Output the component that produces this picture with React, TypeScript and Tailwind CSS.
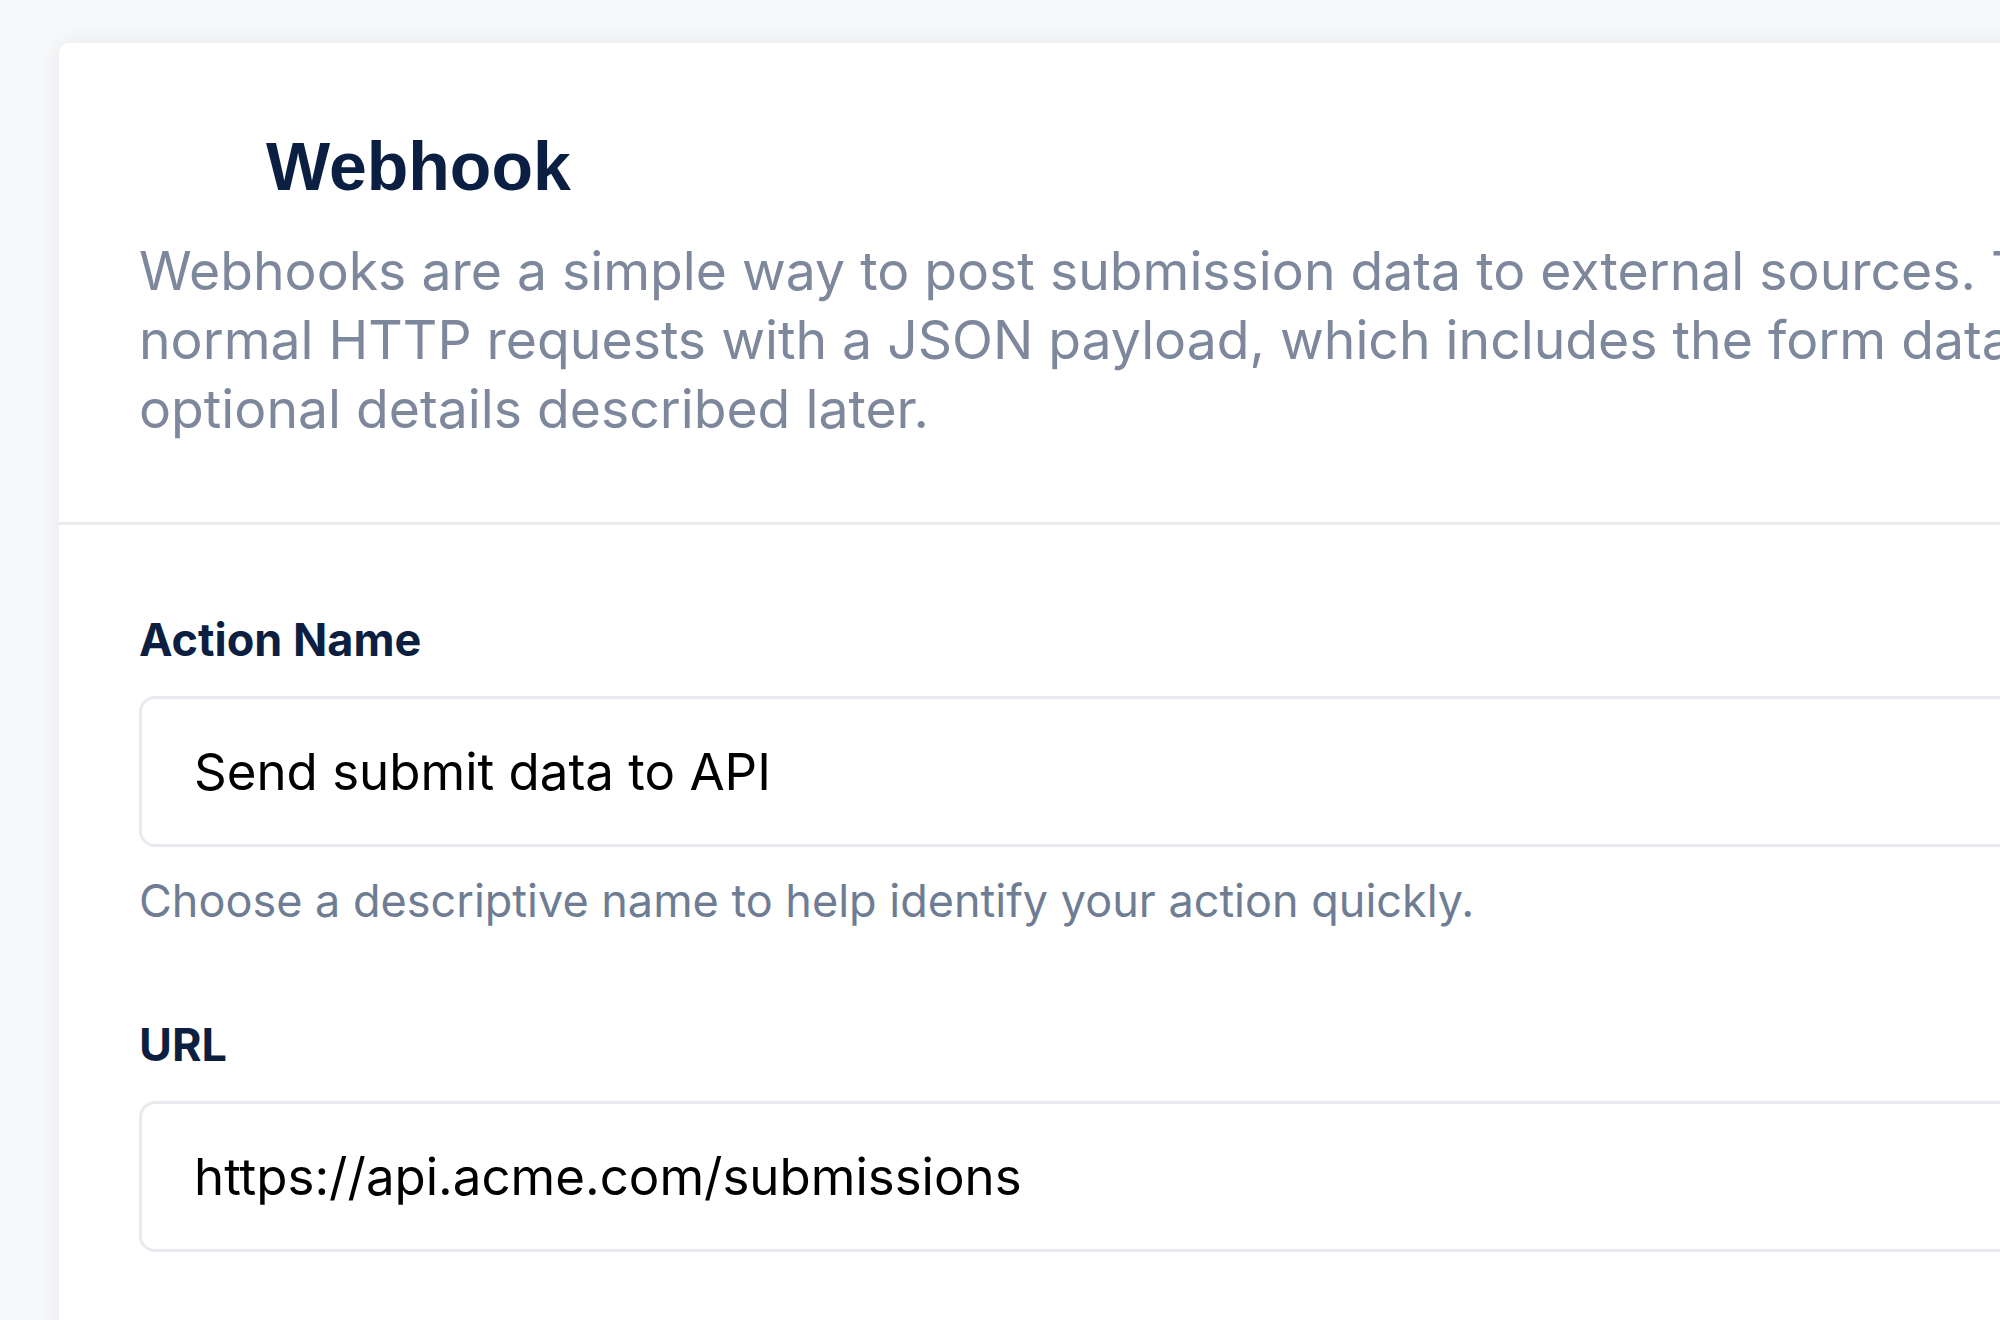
import type { ReactNode } from 'react';

type FieldProps = {
    label: string;
    value: string;
    hint?: ReactNode;
};

function Field({ label, value, hint }: FieldProps) {
    return (
        <div className="flex flex-col">
            <label className="text-[45px] leading-[54px] font-bold text-[#0c1f40]">
                {label}
            </label>
            <div className="mt-[29px] flex h-[151px] items-center rounded-[16px] border-[3px] border-[#e9eaef] bg-white pl-[52px]">
                <span className="text-[51px] leading-none text-black">
                    {value}
                </span>
            </div>
            {hint ? (
                <p className="mt-[27px] text-[45px] leading-[53px] text-[#6f7d94]">
                    {hint}
                </p>
            ) : null}
        </div>
    );
}

export default function App() {
    return (
        <div
            className="h-[1320px] w-full overflow-hidden bg-[#f8f9fb] pt-[43px] pl-[59px]"
            style={{ fontFamily: 'Inter, "Noto Sans", sans-serif' }}
        >
            <div className="w-[2200px] rounded-[10px] bg-white shadow-[0_0_28px_rgba(15,23,42,0.08)]">
                <header className="border-b-[3px] border-[#eaebef] pt-[89px] pb-[79px] pl-[80px]">
                    <div className="flex items-center gap-8">
                        {/* icon slot, empty in the source */}
                        <div className="h-[68px] w-[95px]" />
                        <h1 className="font-['Liberation_Sans',Arial,sans-serif] text-[68px] leading-[68px] font-bold text-[#0b1f43]">
                            Webhook
                        </h1>
                    </div>
                    <p className="mt-[36px] text-[53.5px] leading-[69px] whitespace-nowrap text-[#7d889c]">
                        <span className="block">
                            Webhooks are a simple way to post submission data to
                            external sources. They are
                        </span>
                        <span className="block">
                            normal HTTP requests with a JSON payload, which
                            includes the form data and some
                        </span>
                        <span className="block">
                            optional details described later.
                        </span>
                    </p>
                </header>

                <div className="flex flex-col gap-[91px] pt-[88px] pr-[80px] pb-[120px] pl-[80px]">
                    <Field
                        label="Action Name"
                        value="Send submit data to API"
                        hint="Choose a descriptive name to help identify your action quickly."
                    />
                    <Field
                        label="URL"
                        value="https://api.acme.com/submissions"
                    />
                </div>
            </div>
        </div>
    );
}
